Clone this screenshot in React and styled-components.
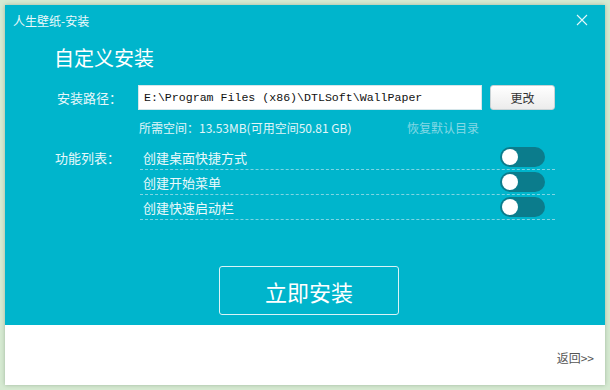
import React from "react";
import styled, { createGlobalStyle } from "styled-components";

const Global = createGlobalStyle`
  html, body { margin: 0; padding: 0; }
  body {
    background: #d6ead2;
    width: 610px;
    height: 390px;
    overflow: hidden;
    font-family: "Noto Sans CJK SC", "Noto Sans", sans-serif;
  }
`;

const Stage = styled.div`
  padding: 5px 0 0 5px;
`;

const Window = styled.div`
  width: 600px;
  height: 380px;
  display: flex;
  flex-direction: column;
  box-shadow: 0 0 4px rgba(60, 90, 60, 0.35);
`;

const Main = styled.div`
  height: 320px;
  background: #00b5cc;
  display: flex;
  flex-direction: column;
`;

const TitleBar = styled.div`
  height: 30px;
  display: flex;
  align-items: center;
  justify-content: space-between;
  padding: 0 17px 0 8px;
`;

const Title = styled.span`
  color: #eaf9fb;
  font-size: 12px;
`;

const Body = styled.div`
  padding: 0 0 0 50px;
  display: flex;
  flex-direction: column;
`;

const Heading = styled.h1`
  margin: 9px 0 0 -1px;
  font-size: 20px;
  font-weight: 400;
  line-height: 28px;
  color: #ffffff;
`;

const PathRow = styled.div`
  margin-top: 13px;
  display: flex;
  align-items: center;
  height: 25px;
`;

const Label = styled.span`
  width: 83px;
  padding-left: ${(p) => p.$indent || 0}px;
  box-sizing: border-box;
  flex: none;
  color: #e8f8fb;
  font-size: 13px;
`;

const PathInput = styled.div`
  width: 344px;
  height: 25px;
  box-sizing: border-box;
  background: #fff;
  border: 1px solid #d6e6ea;
  display: flex;
  align-items: center;
  padding-left: 5px;
  font-family: "Liberation Mono", "DejaVu Sans Mono", monospace;
  font-size: 11.6px;
  color: #111;
  white-space: nowrap;
`;

const ChangeButton = styled.button`
  margin-left: 8px;
  width: 65px;
  height: 25px;
  border: 1px solid #c9d3d6;
  border-radius: 3px;
  background: linear-gradient(#ffffff, #ececec);
  font-family: "Noto Sans CJK SC", sans-serif;
  font-size: 12px;
  color: #333;
  padding: 0;
`;

const SpaceRow = styled.div`
  margin-top: 8px;
  padding-left: 84px;
  display: flex;
  align-items: center;
  height: 18px;
  font-size: 12px;
`;

const SpaceText = styled.span`
  color: #e2f5f9;
  width: 268px;
`;

const Restore = styled.span`
  color: #84d8e5;
`;

const Features = styled.div`
  margin-top: 9px;
  display: flex;
  align-items: flex-start;
`;

const FeatureLabel = styled.span`
  width: 85px;
  flex: none;
  height: 25px;
  line-height: 25px;
  color: #e8f8fb;
  font-size: 13px;
`;

const FeatureList = styled.div`
  width: 415px;
  display: flex;
  flex-direction: column;
`;

const FeatureRow = styled.div`
  height: 25px;
  box-sizing: border-box;
  border-bottom: 1px dashed #7fd5e3;
  display: flex;
  align-items: center;
  justify-content: space-between;
  padding: 0 10px 0 3px;
  color: #eaf9fb;
  font-size: 13px;
`;

const Toggle = styled.span`
  width: 45px;
  height: 20px;
  border-radius: 10px;
  background: #0b7c8c;
  display: flex;
  align-items: center;
  padding-left: 2px;
  box-sizing: border-box;
`;

const Knob = styled.span`
  width: 16px;
  height: 16px;
  border-radius: 50%;
  background: #fff;
`;

const InstallButton = styled.button`
  margin: 46px 0 0 164px;
  width: 180px;
  height: 49px;
  background: transparent;
  border: 1px solid #d9f3f7;
  border-radius: 3px;
  color: #ffffff;
  font-family: "Noto Sans CJK SC", sans-serif;
  font-size: 22px;
  padding: 0;
`;

const Footer = styled.div`
  flex: 1;
  background: #fff;
  display: flex;
  justify-content: flex-end;
  padding: 24px 11px 0 0;
`;

const BackLink = styled.span`
  color: #555;
  font-size: 12px;
  height: 18px;
  line-height: 18px;
`;

const features = ["创建桌面快捷方式", "创建开始菜单", "创建快速启动栏"];

export default function App() {
  return (
    <>
      <Global />
      <Stage>
        <Window>
          <Main>
            <TitleBar>
              <Title>人生壁纸-安装</Title>
              <svg width="12" height="12" viewBox="0 0 12 12">
                <path d="M1 1L11 11M11 1L1 11" stroke="#e4f7fa" strokeWidth="1.1" />
              </svg>
            </TitleBar>
            <Body>
              <Heading>自定义安装</Heading>
              <PathRow>
                <Label $indent={2}>安装路径：</Label>
                <PathInput>E:\Program Files (x86)\DTLSoft\WallPaper</PathInput>
                <ChangeButton>更改</ChangeButton>
              </PathRow>
              <SpaceRow>
                <SpaceText>所需空间：13.53MB(可用空间50.81 GB)</SpaceText>
                <Restore>恢复默认目录</Restore>
              </SpaceRow>
              <Features>
                <FeatureLabel>功能列表：</FeatureLabel>
                <FeatureList>
                  {features.map((f) => (
                    <FeatureRow key={f}>
                      <span>{f}</span>
                      <Toggle>
                        <Knob />
                      </Toggle>
                    </FeatureRow>
                  ))}
                </FeatureList>
              </Features>
              <div>
                <InstallButton>立即安装</InstallButton>
              </div>
            </Body>
          </Main>
          <Footer>
            <BackLink>返回&gt;&gt;</BackLink>
          </Footer>
        </Window>
      </Stage>
    </>
  );
}
